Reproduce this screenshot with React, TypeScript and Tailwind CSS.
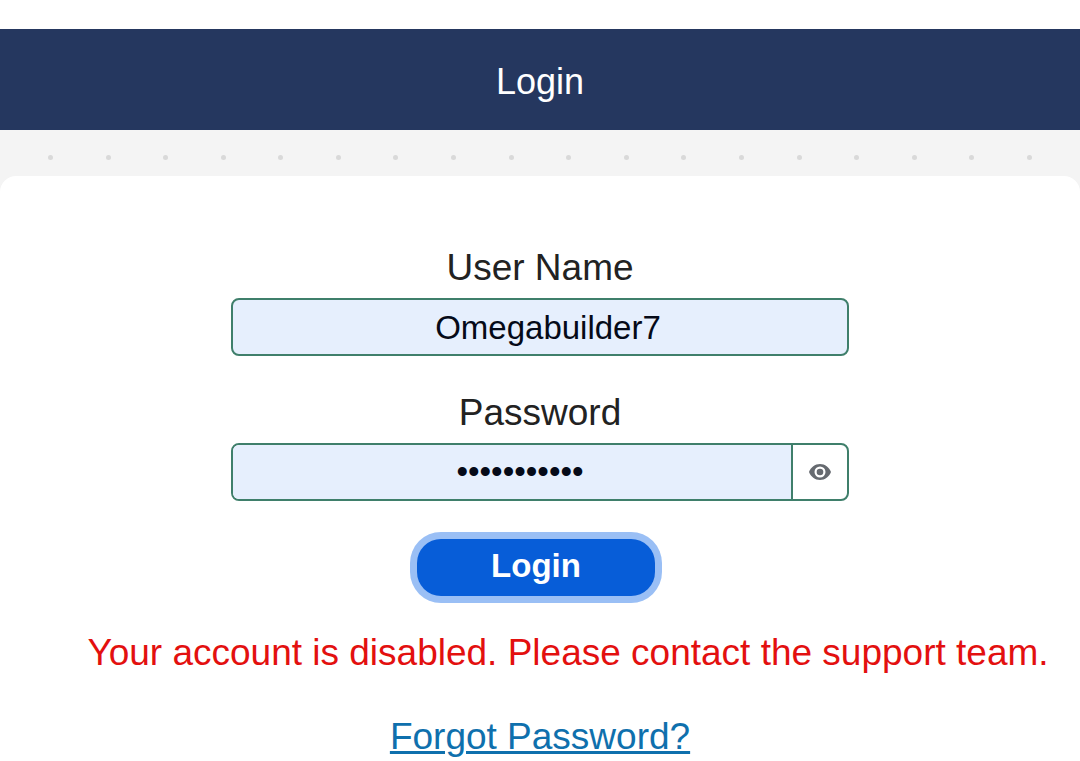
import { useState } from "react";
import type { FormEvent } from "react";

const dots = Array.from({ length: 18 });

const EyeIcon = () => (
  <svg viewBox="0 0 24 24" fill="currentColor" className="size-6" aria-hidden>
    <path
      fillRule="evenodd"
      d="M12 4C7 4 2.8 7.300 1 12c1.800 4.700 6 8 11 8s9.200-3.300 11-8c-1.800-4.700-6-8-11-8Zm0 2.500a5.500 5.500 0 1 1 0 11 5.500 5.500 0 0 1 0-11Z"
    />
    <circle cx="12" cy="12" r="3.300" />
  </svg>
);

const Header = () => (
  <header className="flex h-[101px] items-center justify-center bg-[#25375f] pt-1">
    <h1 className="text-[36px] leading-[44px] text-white">Login</h1>
  </header>
);

const DottedStrip = () => (
  <div className="flex h-[54px] items-center justify-between bg-[#f4f4f4] px-12">
    {dots.map((_, i) => (
      <span key={i} className="size-[5px] rounded-full bg-[#d9d9d9]" />
    ))}
  </div>
);

const App = () => {
  const [userName, setUserName] = useState("Omegabuilder7");
  const [password, setPassword] = useState("builder7777");
  const [showPassword, setShowPassword] = useState(false);

  const handleSubmit = (e: FormEvent) => e.preventDefault();

  return (
    <div className="flex min-h-screen flex-col bg-[#f4f4f4] font-['Liberation_Sans',Arial,sans-serif]">
      <div className="h-[29px] bg-white" />
      <Header />
      <DottedStrip />
      <main className="-mt-2 grow rounded-t-2xl bg-white pt-[70px] text-center">
        <form onSubmit={handleSubmit} className="flex flex-col items-center">
          <label
            htmlFor="username"
            className="text-[37px] leading-[44px] text-[#222]"
          >
            User Name
          </label>
          <input
            id="username"
            type="text"
            value={userName}
            onChange={(e) => setUserName(e.target.value)}
            className="mt-2 h-[58px] w-full max-w-[618px] rounded-lg border-2 border-[#3f7f6b] bg-[#e6effd] pt-px pl-4 text-center text-[33px] text-[#050a18] outline-none"
          />
          <label
            htmlFor="password"
            className="mt-[35px] text-[37px] leading-[44px] text-[#222]"
          >
            Password
          </label>
          <div className="mt-2 flex h-[58px] w-full max-w-[618px] overflow-hidden rounded-lg border-2 border-[#3f7f6b] bg-white">
            <input
              id="password"
              type={showPassword ? "text" : "password"}
              value={password}
              onChange={(e) => setPassword(e.target.value)}
              className="min-w-0 grow bg-[#e6effd] pl-4 text-center text-[33px] text-[#050a18] outline-none"
            />
            <button
              type="button"
              aria-label="Show password"
              onClick={() => setShowPassword((prev) => !prev)}
              className="flex w-14 items-center justify-center border-l-2 border-[#3f7f6b] text-[#666a70]"
            >
              <EyeIcon />
            </button>
          </div>
          <button
            type="submit"
            className="mt-[38px] mr-2 h-[57px] w-[238px] rounded-3xl bg-[#075dd8] pb-1 text-[33px] font-bold text-white ring-7 ring-[#9abff5] outline-none"
          >
            Login
          </button>
          <p
            role="alert"
            className="mt-[35px] pl-14 text-[37px] leading-[44px] text-[#e3100f]"
          >
            Your account is disabled. Please contact the support team.
          </p>
          <a
            href="#"
            className="mt-10 text-[37px] leading-[44px] text-[#0f70ad] underline decoration-3"
          >
            Forgot Password?
          </a>
        </form>
      </main>
    </div>
  );
};

export default App;
